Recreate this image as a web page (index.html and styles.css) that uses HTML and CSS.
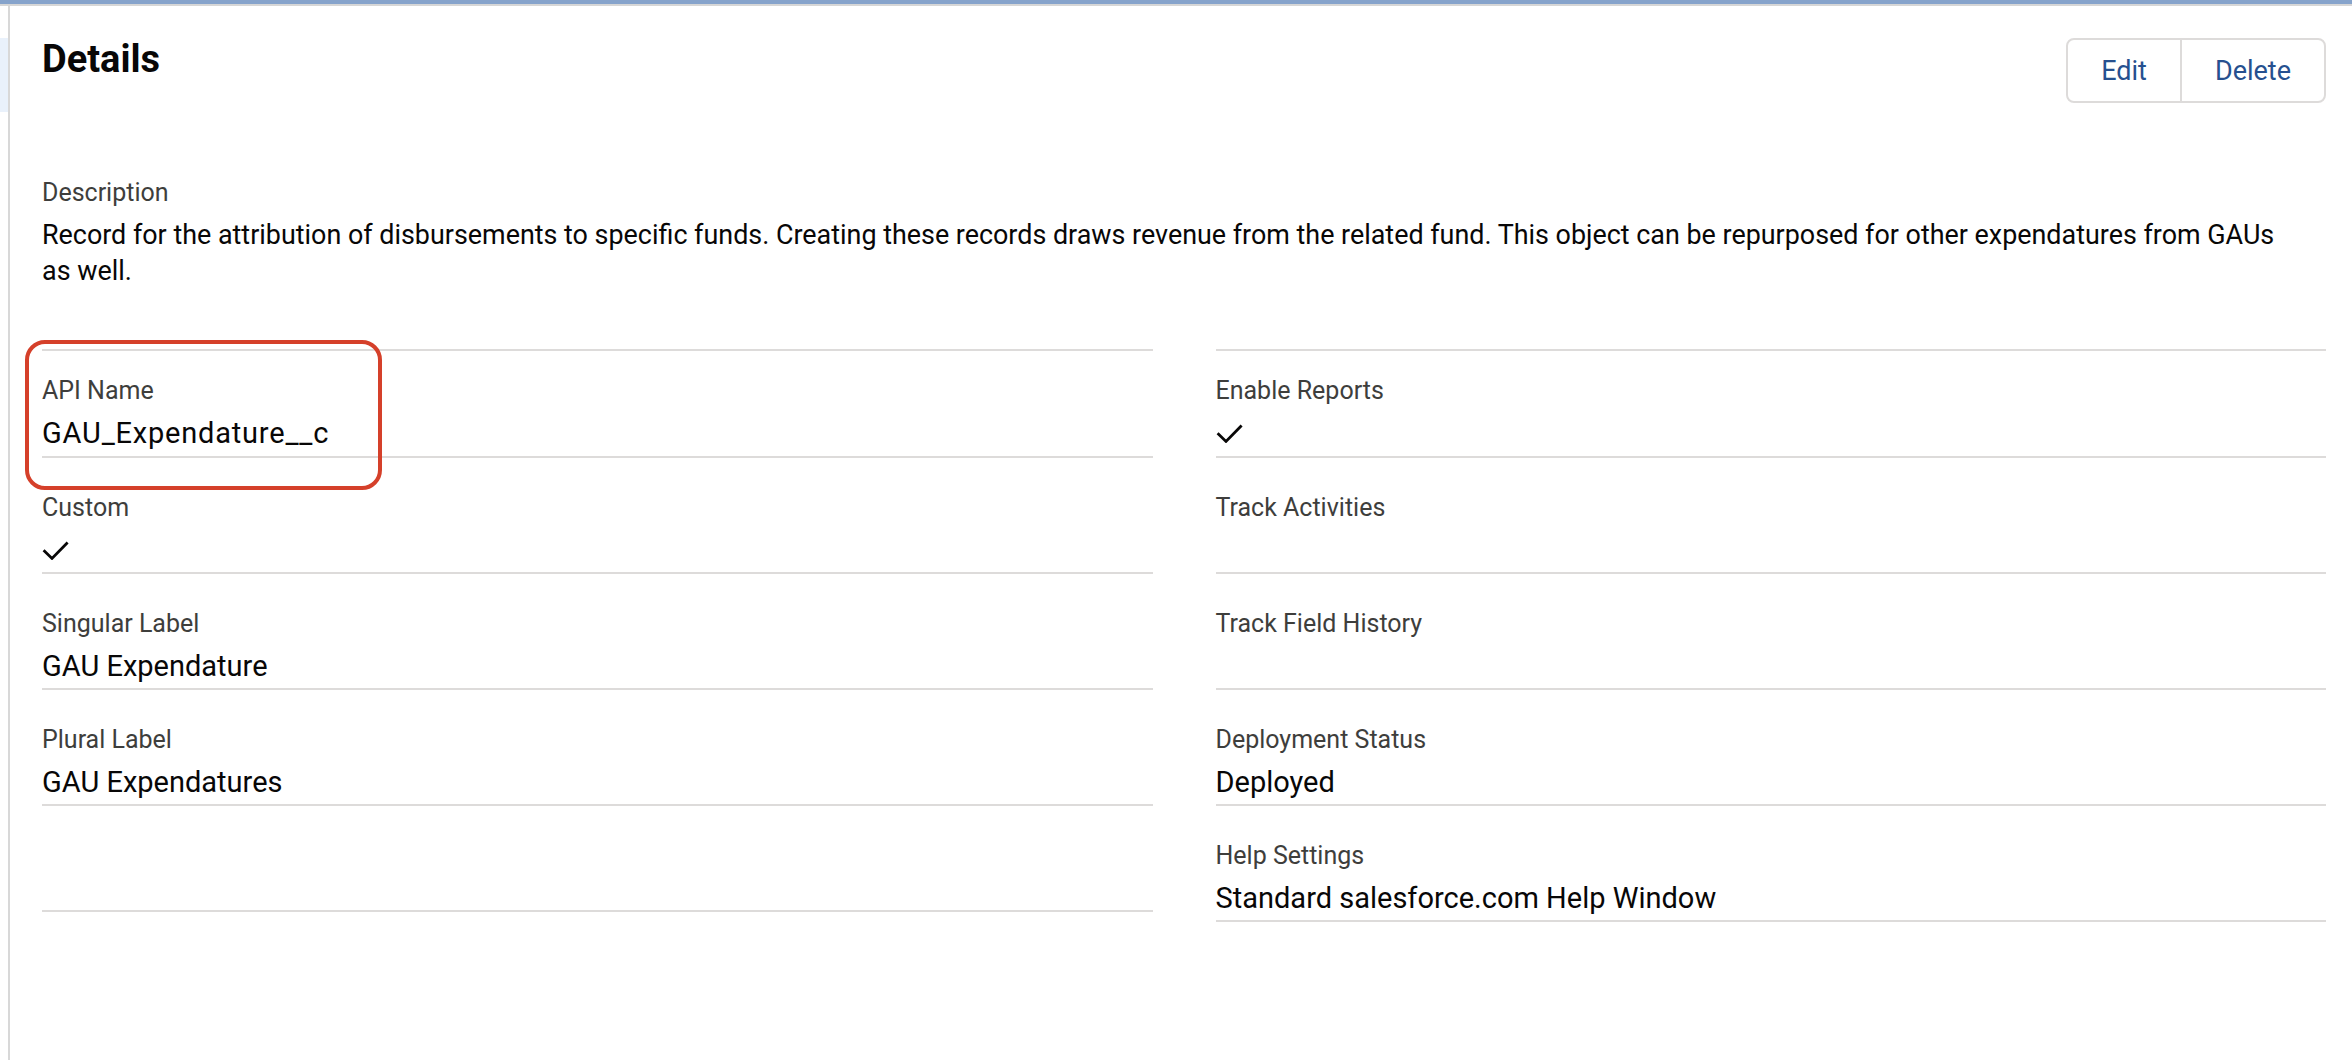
FILE: index.html
```html
<!DOCTYPE html>
<html lang="en">
<head>
<meta charset="utf-8">
<title>Details</title>
<link rel="stylesheet" href="styles.css">
</head>
<body>
<div class="topbar"></div>
<div class="layout">
  <aside class="sidebar"><div class="sidebar-highlight"></div></aside>
  <main class="main">
    <header class="header">
      <h1 class="title">Details</h1>
      <div class="btn-group">
        <button class="btn">Edit</button>
        <button class="btn">Delete</button>
      </div>
    </header>

    <section class="description">
      <div class="label">Description</div>
      <div class="value value-wrap">Record for the attribution of disbursements to specific funds. Creating these records draws revenue from the related fund. This object can be repurposed for other expendatures from GAUs as well.</div>
    </section>

    <section class="fields">
      <div class="field field-first">
        <div class="label">API Name</div>
        <div class="value value-api">GAU_Expendature__c</div>
        <div class="highlight-box"></div>
      </div>
      <div class="field field-first">
        <div class="label">Enable Reports</div>
        <div class="value"><svg class="check" viewBox="0 0 27 19" width="27" height="19"><path d="M1.6 9.2 L10 17.4 L25.6 1.6"/></svg></div>
      </div>

      <div class="field">
        <div class="label">Custom</div>
        <div class="value"><svg class="check" viewBox="0 0 27 19" width="27" height="19"><path d="M1.6 9.2 L10 17.4 L25.6 1.6"/></svg></div>
      </div>
      <div class="field">
        <div class="label">Track Activities</div>
        <div class="value"></div>
      </div>

      <div class="field">
        <div class="label">Singular Label</div>
        <div class="value">GAU Expendature</div>
      </div>
      <div class="field">
        <div class="label">Track Field History</div>
        <div class="value"></div>
      </div>

      <div class="field">
        <div class="label">Plural Label</div>
        <div class="value">GAU Expendatures</div>
      </div>
      <div class="field">
        <div class="label">Deployment Status</div>
        <div class="value">Deployed</div>
      </div>

      <div class="field field-empty"></div>
      <div class="field">
        <div class="label">Help Settings</div>
        <div class="value">Standard salesforce.com Help Window</div>
      </div>
    </section>
  </main>
</div>
</body>
</html>
```

FILE: styles.css
```css
* { box-sizing: border-box; }

html, body {
  margin: 0;
  padding: 0;
  background: #ffffff;
  font-family: "Roboto", "Liberation Sans", sans-serif;
  color: #080707;
}

.topbar {
  height: 6px;
  background: #86a3cb;
  border-bottom: 2px solid #d6d6d6;
}

.layout {
  display: flex;
  min-height: 1054px;
}

.sidebar {
  width: 10px;
  flex: 0 0 10px;
  border-right: 2px solid #d8d8d8;
}

.sidebar-highlight {
  margin-top: 32px;
  height: 74px;
  background: #e9f1fb;
}

.main {
  flex: 1;
  padding: 32px 26px 0 32px;
}

.header {
  display: flex;
  justify-content: space-between;
  align-items: flex-start;
}

.title {
  margin: 0;
  font-size: 38px;
  line-height: 42px;
  font-weight: 700;
  color: #080707;
}

.btn-group {
  display: flex;
  border: 2px solid #dddbda;
  border-radius: 8px;
  height: 65px;
  background: #fff;
}

.btn {
  font-family: inherit;
  font-size: 27px;
  color: #26508f;
  background: transparent;
  border: 0;
  padding: 0 33px;
  margin: 0;
  height: 100%;
  display: flex;
  align-items: center;
}

.btn + .btn {
  border-left: 2px solid #dddbda;
}

.description {
  margin-top: 72px;
}

.label {
  font-size: 25px;
  line-height: 36px;
  color: #3e3e3c;
  min-height: 36px;
}

.value {
  font-size: 29px;
  line-height: 36px;
  margin-top: 6px;
  min-height: 36px;
  color: #080707;
  display: flex;
  align-items: center;
}

.value-wrap {
  display: block;
  font-size: 26.9px;
  padding-right: 28px;
}

.value-api {
  letter-spacing: 0.8px;
}

.check {
  display: block;
  fill: none;
  stroke: #080707;
  stroke-width: 2.8;
}

.fields {
  margin-top: 60px;
  display: grid;
  grid-template-columns: 1fr 1fr;
  column-gap: 63px;
  align-items: start;
}

.field {
  position: relative;
  padding: 32px 0 4px;
  border-bottom: 2px solid #dddbda;
}

.field-first {
  border-top: 2px solid #dddbda;
  padding-top: 22px;
  padding-bottom: 5px;
}

.field-empty {
  padding: 0;
  height: 106px;
}

.highlight-box {
  position: absolute;
  left: -17px;
  top: -11px;
  width: 357px;
  height: 150px;
  border: 4px solid #d5402a;
  border-radius: 20px;
  pointer-events: none;
}
```
